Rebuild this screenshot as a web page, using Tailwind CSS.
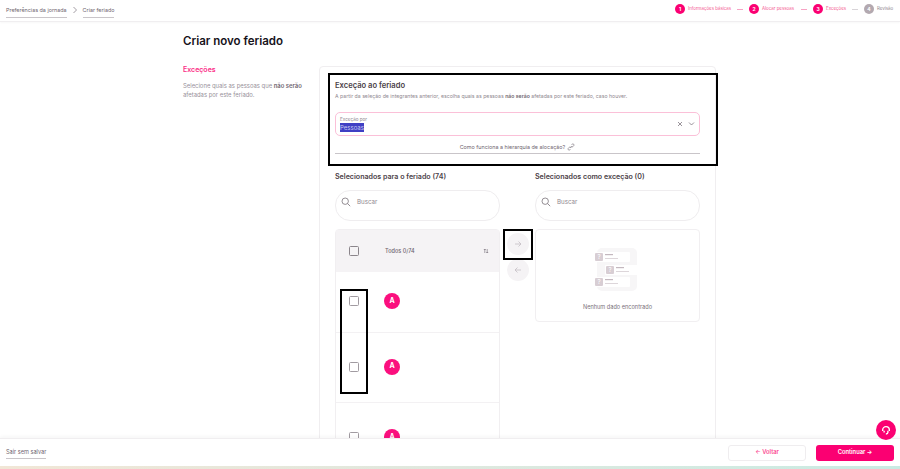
<!DOCTYPE html>
<html lang="pt-BR">
<head>
  <meta charset="UTF-8" />
  <title>Criar novo feriado</title>
  <script src="https://cdn.jsdelivr.net/npm/@tailwindcss/browser@4"></script>
</head>
<body class="h-[469px] w-[900px] overflow-hidden bg-white font-['Inter',sans-serif] relative flex flex-col">

  <!-- Header -->
  <header class="h-[22px] shrink-0 flex items-center justify-between pl-[6px] pr-[6px] border-b border-[#f0eef0] shadow-[0_1px_2px_rgba(0,0,0,0.03)]">
    <nav class="flex items-center text-[5.4px] text-[#6f6670]">
      <span class="border-b border-[#c9c5c9] pb-[3px] pt-[3px]">Preferências da jornada</span>
      <svg class="mx-[5px]" width="6" height="8" viewBox="0 0 6 8" fill="none" stroke="#8a838b" stroke-width="0.8"><path d="M1.5 1l3 3-3 3" /></svg>
      <span class="border-b border-[#c9c5c9] pb-[3px] pt-[3px]">Criar feriado</span>
    </nav>
    <ol class="flex items-center text-[4.4px] leading-[10px] text-[#f4568f] mb-[3px]">
      <li class="w-[10px] h-[10px] rounded-full bg-[#fb0072] text-white text-[5px] font-bold flex items-center justify-center">1</li>
      <li class="ml-[3px] w-[43px] whitespace-nowrap">Informações básicas</li>
      <li class="w-[6px] h-px bg-[#f7a3c4] mx-[6px]"></li>
      <li class="w-[10px] h-[10px] rounded-full bg-[#fb0072] text-white text-[5px] font-bold flex items-center justify-center">2</li>
      <li class="ml-[3px] w-[33px] whitespace-nowrap">Alocar pessoas</li>
      <li class="w-[6px] h-px bg-[#f7a3c4] mx-[6px]"></li>
      <li class="w-[10px] h-[10px] rounded-full bg-[#fb0072] text-white text-[5px] font-bold flex items-center justify-center">3</li>
      <li class="ml-[3px] w-[20px] whitespace-nowrap">Exceções</li>
      <li class="w-[6px] h-px bg-[#d8d4d8] mx-[6px]"></li>
      <li class="w-[10px] h-[10px] rounded-full bg-[#b3a9b0] text-white text-[5px] font-bold flex items-center justify-center">4</li>
      <li class="ml-[3px] w-[17px] whitespace-nowrap text-[#8f878e]">Revisão</li>
    </ol>
  </header>

  <!-- Content -->
  <main class="flex-1 overflow-hidden pl-[183px] pr-[184px]">
    <h1 class="mt-[11px] h-[16px] leading-[16px] text-[11.5px] font-semibold text-[#16121a]">Criar novo feriado</h1>

    <div class="flex mt-[17px]">
      <aside class="w-[136px] shrink-0">
        <h2 class="text-[7px] leading-[8px] font-semibold text-[#fb2e86]">Exceções</h2>
        <p class="mt-[7px] text-[5.9px] leading-[9px] text-[#98919a] w-[130px]">Selecione quais as pessoas que <b class="font-semibold text-[#6f6670]">não serão</b> afetadas por este feriado.</p>
      </aside>

      <section class="w-[397px] h-[400px] border border-[#f0eef0] rounded-[4px] px-[15px] pt-[14px]">
        <h3 class="text-[7.6px] leading-[10px] font-semibold text-[#4b4148]">Exceção ao feriado</h3>
        <p class="mt-[1px] text-[5.2px] leading-[9px] text-[#8f8890] whitespace-nowrap">A partir da seleção de integrantes anterior, escolha quais as pessoas <b class="font-semibold text-[#6f6670]">não serão</b> afetadas por este feriado, caso houver.</p>

        <div class="mt-[11px] h-[24px] border border-[#fbc0d8] rounded-[5px] pl-[4px] pr-[4px] flex items-center justify-between">
          <div class="flex flex-col items-start">
            <span class="text-[4.6px] leading-[7px] text-[#8f8890]">Exceção por</span>
            <span class="text-[6px] leading-[9px] bg-[#3f3fc4] text-[#c7c9f2]">Pessoas</span>
          </div>
          <div class="flex items-center gap-[5px]">
            <svg width="6" height="6" viewBox="0 0 6 6" fill="none" stroke="#6f6670" stroke-width="0.7"><path d="M1 1l4 4M5 1l-4 4" /></svg>
            <svg width="7" height="6" viewBox="0 0 7 6" fill="none" stroke="#6f6670" stroke-width="0.7"><path d="M1 1.5l2.5 2.5L6 1.5" /></svg>
          </div>
        </div>

        <div class="mt-[7px] h-[11px] border-b border-[#c9c5c9] flex items-start justify-center gap-[2px] text-[5.4px] leading-[8px] text-[#6f6670]">
          <span>Como funciona a hierarquia de alocação?</span>
          <svg width="8" height="8" viewBox="0 0 8 8" fill="none" stroke="#6f6670" stroke-width="0.6"><path d="M3.2 5l1.8-1.8M4.4 1.9l.7-.7a1.1 1.1 0 0 1 1.6 1.6l-.9.9a1.1 1.1 0 0 1-1.6 0M3.6 6.1l-.7.7a1.1 1.1 0 0 1-1.6-1.6l.9-.9a1.1 1.1 0 0 1 1.6 0" /></svg>
        </div>

        <div class="mt-[19px] flex">
          <!-- Selected for holiday -->
          <div class="w-[165px] shrink-0">
            <h4 class="text-[7.1px] leading-[8px] font-semibold text-[#4b4148]">Selecionados para o feriado (74)</h4>
            <div class="mt-[9px] h-[31px] border border-[#efedef] rounded-[15px] flex items-start pt-[6px] pl-[5px] gap-[6px]">
              <svg width="10" height="10" viewBox="0 0 10 10" fill="none" stroke="#7a727a" stroke-width="0.8"><circle cx="4.2" cy="4.2" r="3.2" /><path d="M6.6 6.6l2.6 2.6" /></svg>
              <span class="text-[6.2px] leading-[9px] text-[#8f8890]">Buscar</span>
            </div>
            <div class="mt-[8px] border border-[#f1eff1] rounded-[4px] h-[240px]">
              <div class="h-[42px] bg-[#f5f3f5] flex items-center pl-[13px] pr-[10px]">
                <span class="w-[10px] h-[10px] border border-[#8b858b] rounded-[1.5px]"></span>
                <span class="ml-[26px] text-[5.5px] font-medium text-[#6f6670]">Todos 0/74</span>
                <svg class="ml-auto" width="6" height="6" viewBox="0 0 6 6" fill="none" stroke="#6f6670" stroke-width="0.6"><path d="M1.8 5V1M.8 2l1-1 1 1M4.2 1v4M3.2 4l1 1 1-1" /></svg>
              </div>
              <div class="h-[61px] border-b border-[#f3f1f3] flex items-center pb-[2px] pl-[13px]">
                <span class="w-[10px] h-[10px] border border-[#a19ba1] rounded-[1.5px]"></span>
                <span class="ml-[25px] w-[16px] h-[16px] rounded-full bg-[#fb0f7e] text-white text-[7px] font-bold flex items-center justify-center">A</span>
              </div>
              <div class="h-[70px] border-b border-[#f3f1f3] flex items-center pb-[2px] pl-[13px]">
                <span class="w-[10px] h-[10px] border border-[#a19ba1] rounded-[1.5px]"></span>
                <span class="ml-[25px] w-[16px] h-[16px] rounded-full bg-[#fb0f7e] text-white text-[7px] font-bold flex items-center justify-center">A</span>
              </div>
              <div class="h-[60px] flex items-start pt-[26px] pl-[13px]">
                <span class="w-[10px] h-[10px] border border-[#a19ba1] rounded-[1.5px] mt-[3px]"></span>
                <span class="ml-[25px] w-[16px] h-[16px] rounded-full bg-[#fb0f7e] text-white text-[7px] font-bold flex items-center justify-center">A</span>
              </div>
            </div>
          </div>

          <!-- Arrows -->
          <div class="w-[35px] shrink-0 flex flex-col items-center gap-[4px] pt-[60px]">
            <span class="w-[22px] h-[22px] rounded-full bg-[#f5f3f5] flex items-center justify-center">
              <svg width="8" height="8" viewBox="0 0 8 8" fill="none" stroke="#c4bec4" stroke-width="0.8"><path d="M1 4h6M4.5 1.5L7 4 4.5 6.5" /></svg>
            </span>
            <span class="w-[22px] h-[22px] rounded-full bg-[#f5f3f5] flex items-center justify-center">
              <svg width="8" height="8" viewBox="0 0 8 8" fill="none" stroke="#c4bec4" stroke-width="0.8"><path d="M7 4H1M3.5 1.5L1 4l2.5 2.5" /></svg>
            </span>
          </div>

          <!-- Selected as exception -->
          <div class="w-[165px] shrink-0">
            <h4 class="text-[7.1px] leading-[8px] font-semibold text-[#4b4148]">Selecionados como exceção (0)</h4>
            <div class="mt-[9px] h-[31px] border border-[#efedef] rounded-[15px] flex items-start pt-[6px] pl-[5px] gap-[6px]">
              <svg width="10" height="10" viewBox="0 0 10 10" fill="none" stroke="#7a727a" stroke-width="0.8"><circle cx="4.2" cy="4.2" r="3.2" /><path d="M6.6 6.6l2.6 2.6" /></svg>
              <span class="text-[6.2px] leading-[9px] text-[#8f8890]">Buscar</span>
            </div>
            <div class="mt-[8px] h-[93px] border border-[#f1eff1] rounded-[4px] flex flex-col items-center pt-[18px]">
              <svg width="48" height="43" viewBox="0 0 48 43">
                <rect x="3" y="0" width="40" height="43" rx="5" fill="#f7f6f7" />
                <rect x="0" y="4" width="36" height="10" rx="1" fill="#fff" />
                <rect x="1" y="5" width="8" height="8" rx="1" fill="#d8ced4" />
                <text x="5" y="11" font-size="6" text-anchor="middle" fill="#fff">?</text>
                <rect x="11" y="6" width="8" height="1.2" fill="#c4b8bf" />
                <rect x="11" y="10" width="13" height="1" fill="#ddd6da" />
                <rect x="11" y="17" width="36" height="10" rx="1" fill="#fff" />
                <rect x="12" y="18" width="8" height="8" rx="1" fill="#d8ced4" />
                <text x="16" y="24" font-size="6" text-anchor="middle" fill="#fff">?</text>
                <rect x="22" y="19" width="8" height="1.2" fill="#c4b8bf" />
                <rect x="22" y="23" width="13" height="1" fill="#ddd6da" />
                <rect x="0" y="29" width="36" height="10" rx="1" fill="#fff" />
                <rect x="1" y="30" width="8" height="8" rx="1" fill="#d8ced4" />
                <text x="5" y="36" font-size="6" text-anchor="middle" fill="#fff">?</text>
                <rect x="11" y="31" width="8" height="1.2" fill="#c4b8bf" />
                <rect x="11" y="35" width="13" height="1" fill="#ddd6da" />
              </svg>
              <span class="mt-[12px] text-[5.6px] leading-[8px] text-[#7a727a]">Nenhum dado encontrado</span>
            </div>
          </div>
        </div>
      </section>
    </div>
  </main>

  <!-- Footer -->
  <footer class="h-[28px] shrink-0 bg-white border-t border-[#f0eef0] shadow-[0_-2px_3px_rgba(0,0,0,0.03)] flex items-center justify-between pl-[6px] pr-[6px] relative">
    <span class="text-[5.6px] text-[#6f6670] border-b border-[#c9c5c9] pb-[2px] pt-[2px]">Sair sem salvar</span>
    <div class="flex items-center gap-[10px]">
      <span class="w-[78px] h-[16px] border border-[#efedef] rounded-[3px] flex items-center justify-center gap-[3px] text-[5.8px] font-semibold text-[#fb4d94]">← Voltar</span>
      <span class="w-[78px] h-[16px] bg-[#fb0072] rounded-[3px] flex items-center justify-center gap-[3px] text-[5.8px] font-semibold text-white">Continuar →</span>
    </div>
  </footer>
  <div class="h-[3px] shrink-0 bg-gradient-to-r from-[#f1e6d6] via-[#dfe8de] to-[#c9ebe3]"></div>

  <!-- Help button -->
  <span class="absolute left-[876px] top-[420px] w-[20px] h-[20px] rounded-full bg-[#fb0072] flex items-center justify-center">
    <svg width="10" height="10" viewBox="0 0 9 9" fill="none" stroke="#fff" stroke-width="1.2"><path d="M1.5 5.5V4.5a3 3 0 0 1 6 0v1M2.8 5.2v1.5M6.2 5.2v1.5M6.2 6.8c0 1-1 1.3-1.8 1.3" /></svg>
  </span>

  <!-- Annotation frames -->
  <div class="absolute left-[328px] top-[73px] w-[390px] h-[93px] border-2 border-black"></div>
  <div class="absolute left-[503px] top-[229px] w-[30px] h-[31px] border-2 border-black"></div>
  <div class="absolute left-[340px] top-[289px] w-[28px] h-[105px] border-2 border-black"></div>
</body>
</html>
